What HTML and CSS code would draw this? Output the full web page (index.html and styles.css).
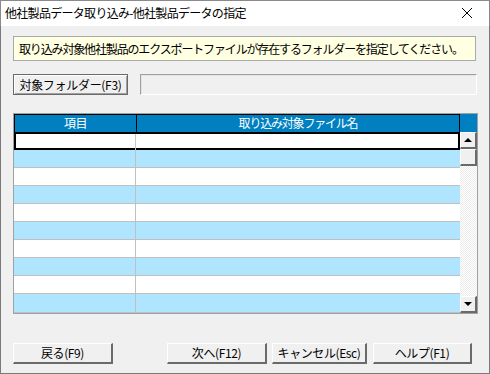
FILE: index.html
```html
<!DOCTYPE html>
<html lang="ja">
<head>
<meta charset="utf-8">
<link rel="stylesheet" href="styles.css">
</head>
<body>
<div class="window">
  <div class="titlebar">
    <span class="title">他社製品データ取り込み-他社製品データの指定</span>
    <svg class="close" width="12" height="12" viewBox="0 0 12 12"><path d="M1 1 L11 11 M11 1 L1 11" stroke="#000" stroke-width="1" fill="none"/></svg>
  </div>
  <div class="client">
    <div class="message">取り込み対象他社製品のエクスポートファイルが存在するフォルダーを指定してください。</div>
    <div class="folder-row">
      <div class="btn btn-default folder-btn">対象フォルダー(F3)</div>
      <div class="field"></div>
    </div>
    <div class="grid">
      <div class="table">
        <div class="head">
          <div class="c1">項目</div>
          <div class="c2">取り込み対象ファイル名</div>
        </div>
        <div class="row sel"><div class="c1"></div><div class="c2"></div></div>
        <div class="row alt"><div class="c1"></div><div class="c2"></div></div>
        <div class="row"><div class="c1"></div><div class="c2"></div></div>
        <div class="row alt"><div class="c1"></div><div class="c2"></div></div>
        <div class="row"><div class="c1"></div><div class="c2"></div></div>
        <div class="row alt"><div class="c1"></div><div class="c2"></div></div>
        <div class="row"><div class="c1"></div><div class="c2"></div></div>
        <div class="row alt"><div class="c1"></div><div class="c2"></div></div>
        <div class="row"><div class="c1"></div><div class="c2"></div></div>
        <div class="row alt last"><div class="c1"></div><div class="c2"></div></div>
      </div>
      <div class="scroll">
        <div class="scroll-head"></div>
        <div class="track">
          <div class="sbtn"><span class="tri up"></span></div>
          <div class="sbtn thumb"></div>
          <div class="gap"></div>
          <div class="sbtn"><span class="tri down"></span></div>
        </div>
      </div>
    </div>
    <div class="buttons">
      <div class="btn b-back">戻る(F9)</div>
      <div class="btn b-next">次へ(F12)</div>
      <div class="btn b-cancel">キャンセル(Esc)</div>
      <div class="btn b-help">ヘルプ(F1)</div>
    </div>
  </div>
</div>
</body>
</html>
```

FILE: styles.css
```css
* { box-sizing: border-box; }
html, body { margin: 0; padding: 0; background: #f0f0f0; }
body { font-family: "Noto Sans CJK JP", "Noto Sans", sans-serif; font-size: 12px; color: #000; }
.window { width: 490px; height: 374px; display: flex; flex-direction: column; }
.titlebar {
  height: 26px; background: #fff; display: flex; align-items: center; justify-content: space-between;
  padding: 0 16px 0 4px; border: 1px solid #8a8a8a; border-bottom: none;
}
.title { font-size: 12px; letter-spacing: -0.7px; line-height: 1; margin-top: -2px; }
.close { margin-top: -2px; }
.client {
  flex: 1; display: flex; flex-direction: column;
  border: 1px solid #7a7a7a; border-top: none;
  padding: 10px 12px 0 12px;
}
.message {
  width: 463px; height: 25px; background: #ffffe1; border: 1px solid #a9a9a9;
  padding-left: 5px; line-height: 23px; letter-spacing: -1.15px; white-space: nowrap; overflow: hidden;
}
.folder-row { display: flex; margin-top: 13px; height: 21px; }
.btn {
  height: 21px; background: #f0f0f0; display: flex; align-items: center; justify-content: center;
  border-style: solid; border-width: 1px 2px 2px 1px;
  border-color: #ffffff #6a6a6a #6a6a6a #ffffff;
  letter-spacing: -0.4px; white-space: nowrap; line-height: 1;
}
.btn-default { border: 1px solid #6a6a6a; box-shadow: inset 1px 1px 0 #fff, inset -1px -1px 0 #a0a0a0; }
.folder-btn { width: 115px; letter-spacing: -0.3px; }
.field {
  margin-left: 12px; width: 337px; height: 21px; background: #f0f0f0;
  border-style: solid; border-width: 1px; border-color: #a0a0a0 #ffffff #ffffff #a0a0a0;
  box-shadow: inset 1px 1px 0 #e3e3e3;
}
.grid {
  margin-top: 18px; width: 465px; height: 201px; border: 1px solid #a0a0a0;
  display: flex; background: #fff;
}
.table { width: 446px; display: flex; flex-direction: column; }
.head {
  height: 18px; background: #0080c0; color: #fff; display: flex;
  border: 1px solid #000; border-bottom: none;
}
.head .c1 { width: 122px; border-right: 1px solid #000; text-align: center; line-height: 16px; letter-spacing: -0.5px; }
.head .c2 { flex: 1; text-align: center; line-height: 16px; letter-spacing: -1.2px; }
.row { height: 18px; display: flex; background: #fff; border-bottom: 1px solid #c0c0c0; }
.row.alt { background: #afe5ff; }
.row .c1 { width: 122px; border-right: 1px solid #c0c0c0; }
.row .c2 { flex: 1; }
.row.sel { border-bottom: none; border-top: 2px solid #000; box-shadow: inset 2px 0 0 #000, inset -2px 0 0 #000, inset 0 -2px 0 #000; }
.row.sel .c1 { border-right-color: #c8c8c8; }
.row.last { height: 19px; }
.scroll { width: 17px; display: flex; flex-direction: column; }
.scroll-head { height: 18px; background: #0080c0; }
.track {
  flex: 1; display: flex; flex-direction: column;
  background-color: #f6f6f6;
  background-image: repeating-conic-gradient(#ffffff 0 25%, #ececec 0 50%);
  background-size: 2px 2px;
}
.sbtn {
  height: 17px; background: #f0f0f0; display: flex; align-items: center; justify-content: center;
  border-style: solid; border-width: 1px 2px 2px 1px;
  border-color: #ffffff #6a6a6a #6a6a6a #ffffff;
}
.gap { flex: 1; }
.tri { width: 0; height: 0; border-left: 4px solid transparent; border-right: 4px solid transparent; }
.tri.up { border-bottom: 4px solid #000; }
.tri.down { border-top: 4px solid #000; }
.buttons { display: flex; margin-top: 29px; }
.b-back { width: 100px; }
.b-next { width: 100px; margin-left: 54px; }
.b-cancel { width: 95px; margin-left: 5px; }
.b-help { width: 99px; margin-left: 6px; }
```
